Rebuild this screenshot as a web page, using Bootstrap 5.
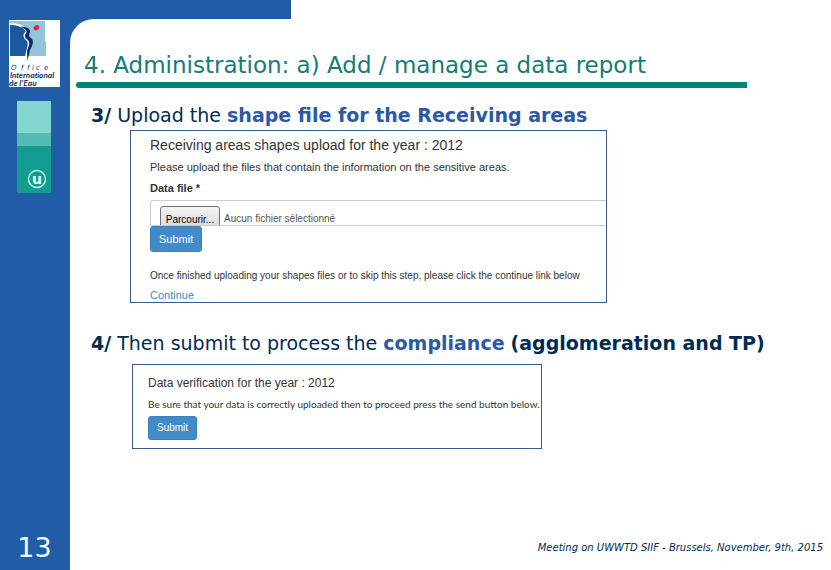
<!DOCTYPE html>
<html lang="en">
<head>
<meta charset="utf-8">
<meta name="viewport" content="width=device-width, initial-scale=1">
<title>Administration: add / manage a data report</title>
<link href="https://cdn.jsdelivr.net/npm/bootstrap@5.3.0/dist/css/bootstrap.min.css" rel="stylesheet">
<style>
  :root { --brand: #215da6; --teal: #05807d; --ink: #002b55; }
  body { font-family: "DejaVu Sans", sans-serif; color: var(--ink); background: #fff; }
  .side { width: 70px; background: var(--brand); padding: 20px 10px 6px 9px; }
  .side-strip { margin: 14px 0 0 8px; }
  .page-no { font-size: 27px; line-height: 32px; color: #f0ffff; }
  .top-band { height: 19px; width: 221px; background: var(--brand); }
  .sheet-wrap { background: linear-gradient(var(--brand), var(--brand)) 0 0 / 24px 24px no-repeat; }
  .sheet { background: #fff; border-top-left-radius: 24px; padding: 30px 8px 12px 6px; }
  .slide-title { font-size: 23px; line-height: 32px; color: #157c74; margin: 0 0 1px 8px; }
  .rule { height: 6px; background: var(--teal); margin-right: 76px; border-radius: 3px 0 0 3px; }
  .step { font-size: 19px; line-height: 24px; margin: 15px 0 3px 15px; }
  .step-late { margin-top: 28px; margin-bottom: 9px; }
  .key { color: #2c58a8; }
  .shot { font-family: "Liberation Sans", Arial, sans-serif; font-size: 11px; line-height: 16px; color: #333; border: 1px solid #385d8a; overflow: hidden; }
  .shot-upload { max-width: 477px; min-height: 173px; margin-left: 54px; padding: 5px 0 0 19px; }
  .shot-verify { max-width: 410px; margin-left: 56px; padding: 9px 0 8px 15px; }
  .shot-title { font-size: 14px; line-height: 18px; margin: 0; }
  .shot-title-small { font-size: 12px; }
  .intro { margin: 5px 0; }
  .field-label { margin-bottom: 4px; }
  .file-field { height: 26px; border: 1px solid #ccc; border-right: 0; border-radius: 3px 0 0 0; padding: 5px 0 0 9px; font-size: 10px; line-height: 25px; color: #555; }
  .file-pick { width: 60px; height: 26px; border: 1px solid #707070; border-radius: 3px; background: linear-gradient(#f3f3f3, #d5d5d5); color: #000; }
  .send { --bs-btn-bg: #428bca; --bs-btn-border-color: #3b80bd; --bs-btn-color: #fff; --bs-btn-padding-x: 8px; --bs-btn-padding-y: 4px; --bs-btn-font-size: 11px; --bs-btn-line-height: 16px; --bs-btn-border-radius: 3px; font-family: "Liberation Sans", Arial, sans-serif; }
  .send-small { --bs-btn-font-size: 10px; --bs-btn-line-height: 14px; }
  .shot a { color: #428bca; line-height: 14px; }
  .copy { font-family: Lato, "Liberation Sans", sans-serif; }
  .small-copy { font-size: 10px; }
  .meeting { font-size: 10px; line-height: 20px; }
</style>
</head>
<body>
<div class="d-flex min-vh-100">
  <aside class="side d-flex flex-column flex-shrink-0">
    <svg width="51" height="67" viewBox="0 0 51 67" role="img" aria-label="Office International de l'Eau">
      <rect width="51" height="67" fill="#fff"/>
      <path d="M1 1H36V20L37 22V36H1Z" fill="#91c5d9"/>
      <path d="M1 5C8 4 14 7 17 12C14 16 16 19 19 21C21 26 17 31 17 36H1Z" fill="#1d579d"/>
      <path d="M1 4C9 4 14 6 18 10" fill="none" stroke="#fff" stroke-width="2"/>
      <path d="M17 12C13 16 16 18 19 21C21 26 17 31 17 36" fill="none" stroke="#fff" stroke-width="1.500"/>
      <path d="M11 7C17 6 22 9 21 12C20 15 19 16 22 18C25 20 24 25 22 28C20 31 21 34 18 41C19 35 17 33 19 28C21 24 21 22 18 19C15 17 16 14 18 12C17 9 14 8 11 7Z" fill="#082b63"/>
      <ellipse cx="27.500" cy="8" rx="3" ry="2.400" transform="rotate(-35 27 8)" fill="#d92c43"/>
      <g fill="#20365f" font-style="italic" font-size="7">
        <text y="50" font-family="DejaVu Sans, sans-serif"><tspan x="2">O</tspan><tspan x="12">f</tspan><tspan x="18">f</tspan><tspan x="23">i</tspan><tspan x="27">c</tspan><tspan x="35">e</tspan></text>
        <text x="1" y="58" font-weight="bold" font-family="Inter, sans-serif">International</text>
        <text x="0" y="66" font-weight="bold" font-family="Inter, sans-serif">de l'Eau</text>
      </g>
    </svg>
    <svg class="side-strip" width="34" height="92" viewBox="0 0 34 92" role="img" aria-label="u">
      <rect width="34" height="32" fill="#83d6cf"/>
      <rect y="32" width="34" height="13" fill="#56bbb3"/>
      <rect y="45" width="34" height="47" fill="#159c90"/>
      <circle cx="20" cy="78" r="8.500" fill="none" stroke="#c9f5ef" stroke-width="1.400"/>
      <text x="20" y="83" text-anchor="middle" font-family="DejaVu Sans, sans-serif" font-weight="bold" font-size="14" fill="#e4fffb">u</text>
    </svg>
    <div class="page-no mt-auto text-center">13</div>
  </aside>

  <div class="d-flex flex-column flex-grow-1">
    <div class="top-band"></div>
    <div class="sheet-wrap d-flex flex-column flex-grow-1">
      <main class="sheet d-flex flex-column flex-grow-1">
        <h1 class="slide-title fw-normal">4. Administration: a) Add / manage a data report</h1>
        <div class="rule"></div>

        <h2 class="step fw-normal"><b>3/</b> Upload the <b class="key">shape file for the Receiving areas</b></h2>
        <section class="shot shot-upload">
          <h3 class="shot-title fw-normal">Receiving areas shapes upload for the year : 2012</h3>
          <p class="intro">Please upload the files that contain the information on the sensitive areas.</p>
          <label class="field-label d-block fw-bold" for="data-file">Data file *</label>
          <div class="file-field overflow-hidden d-flex gap-1">
            <label class="file-pick text-center flex-shrink-0" for="data-file">Parcourir...</label>
            <span>Aucun fichier sélectionné</span>
            <input class="visually-hidden" type="file" id="data-file">
          </div>
          <button class="btn send d-block" type="button">Submit</button>
          <p class="small-copy mt-3 mb-1">Once finished uploading your shapes files or to skip this step, please click the continue link below</p>
          <a class="d-block text-decoration-none" href="#">Continue</a>
        </section>

        <h2 class="step step-late fw-normal"><b>4/</b> Then submit to process the <b class="key">compliance</b> <b>(agglomeration and TP)</b></h2>
        <section class="shot shot-verify">
          <h3 class="shot-title shot-title-small fw-normal">Data verification for the year : 2012</h3>
          <p class="copy small-copy mt-1 mb-1">Be sure that your data is correctly uploaded then to proceed press the send button below.</p>
          <button class="btn send send-small" type="button">Submit</button>
        </section>

        <footer class="meeting mt-auto text-end fst-italic">Meeting on UWWTD SIIF - Brussels, November, 9th, 2015</footer>
      </main>
    </div>
  </div>
</div>
<script src="https://cdn.jsdelivr.net/npm/bootstrap@5.3.0/dist/js/bootstrap.bundle.min.js"></script>
</body>
</html>
